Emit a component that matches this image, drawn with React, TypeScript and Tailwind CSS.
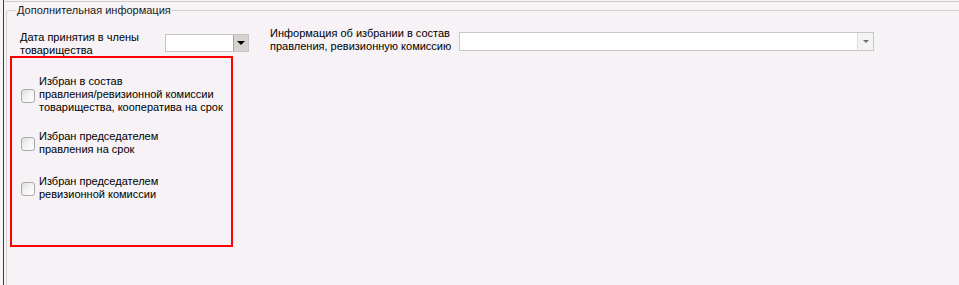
import React from "react";

const options = [
  {
    id: 1,
    gap: "mt-0",
    lines: ["Избран в состав", "правления/ревизионной комиссии", "товарищества, кооператива на срок"],
  },
  { id: 2, gap: "mt-[18px]", lines: ["Избран председателем", "правления на срок"] },
  { id: 3, gap: "mt-[21px]", lines: ["Избран председателем", "ревизионной комиссии"] },
];

const Checkbox = () => (
  <span className="block w-[14px] h-[14px] shrink-0 rounded-[3px] border border-[#a9a9a9] bg-gradient-to-br from-[#dedede] via-[#f4f4f4] to-white" />
);

const App = () => {
  return (
    <div
      className="w-[959px] h-[285px] overflow-hidden bg-[#f6f2f6] text-[11px] leading-[13px] text-black whitespace-nowrap"
      style={{ fontFamily: '"Liberation Sans", Arial, sans-serif' }}
    >
      <div className="ml-[3px] h-full border-l border-[#3c3c3c] pt-px">
        {/* previous group edge */}
        <div className="ml-px h-px bg-[#cdcdcd]" />

        <fieldset className="ml-[2px] mt-[2px] w-[990px] h-[320px] rounded-[3px] border border-[#d0d0d0] p-0">
          <legend className="ml-[9px] px-[1px] text-[#1a1a1a]">Дополнительная информация</legend>

          {/* top row */}
          <div className="flex items-start pl-[13px] pt-[13px]">
            <div className="w-[145px] pt-[1px]">
              <div>Дата принятия в члены</div>
              <div>товарищества</div>
            </div>
            <div className="mt-[4px] flex h-[18px] w-[84px] border border-[#c4c4c4] bg-white">
              <div className="flex-1" />
              <div className="flex w-[15px] items-center justify-center border-l border-[#a8a8a8] bg-[#d6d3cf]">
                <span className="block h-0 w-0 border-x-[4px] border-t-[4px] border-x-transparent border-t-black" />
              </div>
            </div>

            <div className="ml-[21px] w-[189px] -mt-[3px]">
              <div>Информация об избрании в состав</div>
              <div>правления, ревизионную комиссию</div>
            </div>
            <div className="mt-[2px] flex h-[19px] w-[415px] border border-[#c8c8c8] bg-white">
              <div className="flex-1" />
              <div className="flex w-[16px] items-center justify-center border-l border-[#dadada] bg-[#f3f3f3]">
                <span className="block h-0 w-0 border-x-[3.5px] border-t-[3.5px] border-x-transparent border-t-[#6e6e6e]" />
              </div>
            </div>
          </div>

          {/* highlighted checkbox group */}
          <div className="ml-[3px] -mt-px h-[191px] w-[223px] border-2 border-[#ff0000] pl-[9px] pt-[19px]">
            {options.map((o) => (
              <div key={o.id} className={`flex items-center gap-[4px] ${o.gap}`}>
                <Checkbox />
                <div className="-mt-[2px]">
                  {o.lines.map((l) => (
                    <div key={l}>{l}</div>
                  ))}
                </div>
              </div>
            ))}
          </div>
        </fieldset>
      </div>
    </div>
  );
};

export default App;
